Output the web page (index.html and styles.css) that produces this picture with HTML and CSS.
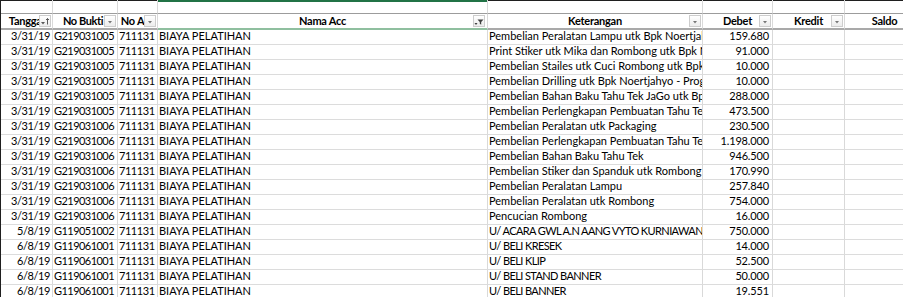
FILE: index.html
```html
<!DOCTYPE html>
<html>
<head>
<meta charset="utf-8">
<link rel="stylesheet" href="styles.css">
</head>
<body>
<div class="sheet">
<table class="grid">
<colgroup>
<col class="c-a"><col class="c-b"><col class="c-c"><col class="c-d"><col class="c-e"><col class="c-f"><col class="c-g"><col class="c-h">
</colgroup>
<tbody>
<tr class="blank"><td></td><td></td><td></td><td class="sel-top"></td><td></td><td></td><td></td><td></td></tr>
<tr class="head">
<th><span class="hl">Tanggal</span><span class="fb"><svg width="10" height="9" viewBox="0 0 10 9"><path d="M1 5h4l-2 2.5z" fill="#595959"/><path d="M7.5 1.5v6M6 3l1.5-1.5 1.5 1.5" stroke="#595959" stroke-width="1" fill="none"/></svg></span></th>
<th><span class="hl hb">No Bukti</span><span class="fb"><svg width="10" height="9" viewBox="0 0 10 9"><path d="M3 4h4l-2 2.5z" fill="#767676"/></svg></span></th>
<th><span class="hl">No Acc</span><span class="fb"><svg width="10" height="9" viewBox="0 0 10 9"><path d="M3 4h4l-2 2.5z" fill="#767676"/></svg></span></th>
<th class="sel-head"><span class="hl">Nama Acc</span><span class="fb"><svg width="10" height="9" viewBox="0 0 10 9"><path d="M3.5 2.5h6l-2.3 2.6v2.6l-1.4-0.9v-1.7z" fill="#404040"/><path d="M0.5 6h3l-1.5 2z" fill="#404040"/></svg></span></th>
<th><span class="hl">Keterangan</span><span class="fb"><svg width="10" height="9" viewBox="0 0 10 9"><path d="M3 4h4l-2 2.5z" fill="#767676"/></svg></span></th>
<th><span class="hl">Debet</span><span class="fb"><svg width="10" height="9" viewBox="0 0 10 9"><path d="M3 4h4l-2 2.5z" fill="#767676"/></svg></span></th>
<th><span class="hl">Kredit</span><span class="fb"><svg width="10" height="9" viewBox="0 0 10 9"><path d="M3 4h4l-2 2.5z" fill="#767676"/></svg></span></th>
<th class="last"><span class="hl">Saldo</span></th>
</tr>
<tr><td class="n dt">3/31/19</td><td class="id">G219031005</td><td class="n ac">711131</td><td>BIAYA PELATIHAN</td><td class="k">Pembelian Peralatan Lampu utk Bpk Noertjahyo</td><td class="n m">159.680</td><td></td><td></td></tr>
<tr><td class="n dt">3/31/19</td><td class="id">G219031005</td><td class="n ac">711131</td><td>BIAYA PELATIHAN</td><td class="k">Print Stiker utk Mika dan Rombong utk Bpk Noertjahyo</td><td class="n m">91.000</td><td></td><td></td></tr>
<tr><td class="n dt">3/31/19</td><td class="id">G219031005</td><td class="n ac">711131</td><td>BIAYA PELATIHAN</td><td class="k">Pembelian Stailes utk Cuci Rombong utk Bpk Noertjahyo</td><td class="n m">10.000</td><td></td><td></td></tr>
<tr><td class="n dt">3/31/19</td><td class="id">G219031005</td><td class="n ac">711131</td><td>BIAYA PELATIHAN</td><td class="k">Pembelian Drilling utk Bpk Noertjahyo - Program</td><td class="n m">10.000</td><td></td><td></td></tr>
<tr><td class="n dt">3/31/19</td><td class="id">G219031005</td><td class="n ac">711131</td><td>BIAYA PELATIHAN</td><td class="k">Pembelian Bahan Baku Tahu Tek JaGo utk Bpk Noertjahyo</td><td class="n m">288.000</td><td></td><td></td></tr>
<tr><td class="n dt">3/31/19</td><td class="id">G219031005</td><td class="n ac">711131</td><td>BIAYA PELATIHAN</td><td class="k">Pembelian Perlengkapan Pembuatan Tahu Tek</td><td class="n m">473.500</td><td></td><td></td></tr>
<tr><td class="n dt">3/31/19</td><td class="id">G219031006</td><td class="n ac">711131</td><td>BIAYA PELATIHAN</td><td class="k">Pembelian Peralatan utk Packaging</td><td class="n m">230.500</td><td></td><td></td></tr>
<tr><td class="n dt">3/31/19</td><td class="id">G219031006</td><td class="n ac">711131</td><td>BIAYA PELATIHAN</td><td class="k">Pembelian Perlengkapan Pembuatan Tahu Tek</td><td class="n m">1.198.000</td><td></td><td></td></tr>
<tr><td class="n dt">3/31/19</td><td class="id">G219031006</td><td class="n ac">711131</td><td>BIAYA PELATIHAN</td><td class="k">Pembelian Bahan Baku Tahu Tek</td><td class="n m">946.500</td><td></td><td></td></tr>
<tr><td class="n dt">3/31/19</td><td class="id">G219031006</td><td class="n ac">711131</td><td>BIAYA PELATIHAN</td><td class="k">Pembelian Stiker dan Spanduk utk Rombong</td><td class="n m">170.990</td><td></td><td></td></tr>
<tr><td class="n dt">3/31/19</td><td class="id">G219031006</td><td class="n ac">711131</td><td>BIAYA PELATIHAN</td><td class="k">Pembelian Peralatan Lampu</td><td class="n m">257.840</td><td></td><td></td></tr>
<tr><td class="n dt">3/31/19</td><td class="id">G219031006</td><td class="n ac">711131</td><td>BIAYA PELATIHAN</td><td class="k">Pembelian Peralatan utk Rombong</td><td class="n m">754.000</td><td></td><td></td></tr>
<tr><td class="n dt">3/31/19</td><td class="id">G219031006</td><td class="n ac">711131</td><td>BIAYA PELATIHAN</td><td class="k">Pencucian Rombong</td><td class="n m">16.000</td><td></td><td></td></tr>
<tr><td class="n dt">5/8/19</td><td class="id">G119051002</td><td class="n ac">711131</td><td>BIAYA PELATIHAN</td><td class="k caps">U/ ACARA GWL A.N AANG VYTO KURNIAWAN</td><td class="n m">750.000</td><td></td><td></td></tr>
<tr><td class="n dt">6/8/19</td><td class="id">G119061001</td><td class="n ac">711131</td><td>BIAYA PELATIHAN</td><td class="k caps">U/ BELI KRESEK</td><td class="n m">14.000</td><td></td><td></td></tr>
<tr><td class="n dt">6/8/19</td><td class="id">G119061001</td><td class="n ac">711131</td><td>BIAYA PELATIHAN</td><td class="k caps">U/ BELI KLIP</td><td class="n m">52.500</td><td></td><td></td></tr>
<tr><td class="n dt">6/8/19</td><td class="id">G119061001</td><td class="n ac">711131</td><td>BIAYA PELATIHAN</td><td class="k caps">U/ BELI STAND BANNER</td><td class="n m">50.000</td><td></td><td></td></tr>
<tr><td class="n dt">6/8/19</td><td class="id">G119061001</td><td class="n ac">711131</td><td>BIAYA PELATIHAN</td><td class="k caps">U/ BELI BANNER</td><td class="n m">19.551</td><td></td><td></td></tr>
</tbody>
</table>
</div>
</body>
</html>
```
FILE: styles.css
```css
html, body {
  margin: 0;
  padding: 0;
  background: #ffffff;
}
.sheet {
  width: 903px;
  height: 297px;
  overflow: hidden;
  border-left: 1px solid #1f1f1f;
  box-sizing: border-box;
}
.grid {
  border-collapse: separate;
  border-spacing: 0;
  table-layout: fixed;
  width: 924px;
  font-family: Lato, "Liberation Sans", sans-serif;
  font-size: 11px;
  color: #000;
}
.c-a { width: 52px; }
.c-b { width: 65px; }
.c-c { width: 40px; }
.c-d { width: 330px; }
.c-e { width: 215px; }
.c-f { width: 70px; }
.c-g { width: 72px; }
.c-h { width: 80px; }
.grid tr {
  height: 15px;
}
.grid td {
  border-right: 1px solid #d9d9d9;
  border-bottom: 1px solid #dcdcdc;
  padding: 0 1px 2px 1px;
  white-space: nowrap;
  overflow: hidden;
  text-overflow: clip;
  line-height: 12px;
  height: 12px;
  vertical-align: bottom;
  text-align: left;
}
.grid td.n {
  text-align: right;
  padding-right: 2px;
}
.grid td.dt {
  letter-spacing: -0.4px;
}
.grid td.id {
  letter-spacing: -0.55px;
}
.grid td.ac {
  letter-spacing: -0.45px;
  padding-right: 3px;
}
.grid td.m {
  padding-right: 3px;
  letter-spacing: -0.15px;
}
.grid td.caps {
  letter-spacing: -0.6px;
}
.grid tr.blank {
  height: 14px;
}
.grid tr.blank td {
  height: 11px;
  padding: 0;
  border-bottom: 1px solid #9c9c9c;
  box-shadow: inset 0 1px 0 #1f1f1f;
}
.grid tr.blank td.sel-top {
  box-shadow: inset 0 2px 0 #217346;
}
.grid tr.head {
  height: 16px;
}
.grid tr.head th {
  position: relative;
  height: 13px;
  padding: 0 1px 1px 1px;
  border-right: 1px solid #d9d9d9;
  border-bottom: 2px solid #a9a9a9;
  font-weight: 700;
  font-size: 11px;
  line-height: 12px;
  letter-spacing: -0.25px;
  vertical-align: bottom;
  text-align: center;
  white-space: nowrap;
  overflow: hidden;
}
.grid tr.head th.sel-head {
  border-bottom-color: #8fbf9f;
}
.hl {
  display: block;
  overflow: hidden;
}
.hl.hb {
  letter-spacing: -0.4px;
  padding-right: 4px;
}
.fb {
  position: absolute;
  right: 1px;
  bottom: 1px;
  width: 10px;
  height: 10px;
  border: 1px solid #cdcdcd;
  background: linear-gradient(#ffffff, #ececec);
  display: flex;
  align-items: center;
  justify-content: center;
}
.sel-head .fb {
  right: 2px;
}
.fb svg {
  display: block;
}
```
